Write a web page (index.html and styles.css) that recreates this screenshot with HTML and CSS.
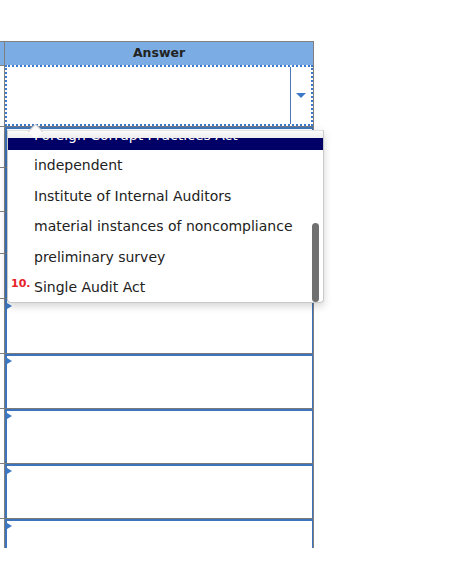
FILE: index.html
```html
<!DOCTYPE html>
<html lang="en">
<head>
<meta charset="UTF-8">
<meta name="viewport" content="width=device-width, initial-scale=1.0">
<title>Answer</title>
<link rel="stylesheet" href="styles.css">
</head>
<body>
<div class="sheet">
  <div class="grid">
    <div class="stub head"></div>
    <div class="cell head">Answer</div>

    <div class="stub"></div>
    <div class="cell pick">
      <div class="pick-box"><span class="pick-btn"></span></div>
    </div>

    <div class="stub"></div>
    <div class="cell field"><div class="box"><span class="flag"></span></div></div>
    <div class="stub"></div>
    <div class="cell field"><div class="box"><span class="flag"></span></div></div>
    <div class="stub"></div>
    <div class="cell field"><div class="box"><span class="flag"></span></div></div>
    <div class="stub"></div>
    <div class="cell field"><div class="box"><span class="flag"></span></div></div>
    <div class="stub"></div>
    <div class="cell field"><div class="box"><span class="flag"></span></div></div>
    <div class="stub"></div>
    <div class="cell field"><div class="box"><span class="flag"></span></div></div>
    <div class="stub"></div>
    <div class="cell field"><div class="box"><span class="flag"></span></div></div>
    <div class="stub"></div>
    <div class="cell field"><div class="box"><span class="flag"></span></div></div>
    <div class="stub"></div>
    <div class="cell field"><div class="box"><span class="flag"></span></div></div>
  </div>

  <!-- open dropdown list -->
  <div class="popup">
    <div class="popup-top"></div>
    <ul class="list">
      <li class="opt on">Foreign Corrupt Practices Act</li>
      <li class="opt">independent</li>
      <li class="opt">Institute of Internal Auditors</li>
      <li class="opt">material instances of noncompliance</li>
      <li class="opt">preliminary survey</li>
      <li class="opt"><span class="num">10.</span>Single Audit Act</li>
    </ul>
    <div class="scroll"></div>
  </div>
</div>
</body>
</html>
```

FILE: styles.css
```css
body {
  margin: 0;
  font-family: "DejaVu Sans", Verdana, sans-serif;
  background: #fff;
}

.sheet {
  position: relative;
  padding-top: 41px;
  height: 507px;
  overflow: hidden;
}

.grid {
  display: grid;
  grid-template-columns: 5px 309px;
  grid-template-rows: 24px 61px 41px 44px 42px 45px 55px 55px 55px 55px 55px;
}

.stub {
  border-top: 1px solid #808080;
  border-right: 1px solid #808080;
  box-sizing: border-box;
}

.stub.head {
  background: #7badE4;
}

.cell {
  box-sizing: border-box;
  border-right: 1px solid #808080;
}

.cell.head {
  border-top: 1px solid #808080;
  background: #7badE4;
  color: #222;
  font-weight: bold;
  font-size: 12.5px;
  text-align: center;
  line-height: 22px;
}

.cell.pick {
  background: #fff;
}

.pick-box {
  height: 100%;
  box-sizing: border-box;
  border: 2px dotted #3b79cc;
  position: relative;
}

.pick-btn {
  position: absolute;
  right: 0;
  top: 0;
  bottom: 0;
  width: 20px;
  border-left: 1px solid #4a76b2;
}

.pick-btn::after {
  content: "";
  position: absolute;
  left: 5px;
  top: 26px;
  border-left: 5px solid transparent;
  border-right: 5px solid transparent;
  border-top: 5px solid #3c78c8;
}

.cell.field {
  border-top: 1px solid #7a7a7a;
}

.box {
  height: 100%;
  box-sizing: border-box;
  border: 2px solid #3d74bb;
  border-bottom: 0;
  border-right-width: 1px;
  position: relative;
}

.flag {
  position: absolute;
  left: 0;
  top: 2px;
  border-top: 3.5px solid transparent;
  border-bottom: 3.5px solid transparent;
  border-left: 5px solid #3a78c8;
}

/* dropdown */
.popup {
  position: absolute;
  left: 7px;
  top: 130px;
  width: 317px;
  box-sizing: border-box;
  border: 1px solid #c9c9c9;
  border-top-color: #e2e2e2;
  border-radius: 0 0 4px 4px;
  background: #fff;
  box-shadow: 0 3px 8px rgba(0, 0, 0, 0.18);
}

.popup-top {
  height: 7px;
  background: linear-gradient(#fbfbfb, #eeeeee);
  position: relative;
}

.popup-top::before {
  content: "";
  position: absolute;
  left: 22px;
  top: -5px;
  width: 10px;
  height: 10px;
  background: #fbfbfb;
  border-top: 1px solid #d0d0d0;
  border-left: 1px solid #d0d0d0;
  transform: rotate(45deg);
}

.list {
  list-style: none;
  margin: 0;
  padding: 0;
  height: 164px;
  overflow: hidden;
}

.opt {
  position: relative;
  height: 30.5px;
  line-height: 30.5px;
  padding-left: 26px;
  font-size: 14px;
  color: #222;
  white-space: nowrap;
}

.opt.on {
  margin-top: -18.5px;
  background: #000066;
  color: #fff;
}

.num {
  position: absolute;
  left: 3px;
  top: -3px;
  font-size: 11px;
  font-weight: bold;
  color: #e8212b;
}

.scroll {
  position: absolute;
  left: 304px;
  top: 92px;
  width: 7px;
  height: 79px;
  border-radius: 4px;
  background: #707070;
}
```
